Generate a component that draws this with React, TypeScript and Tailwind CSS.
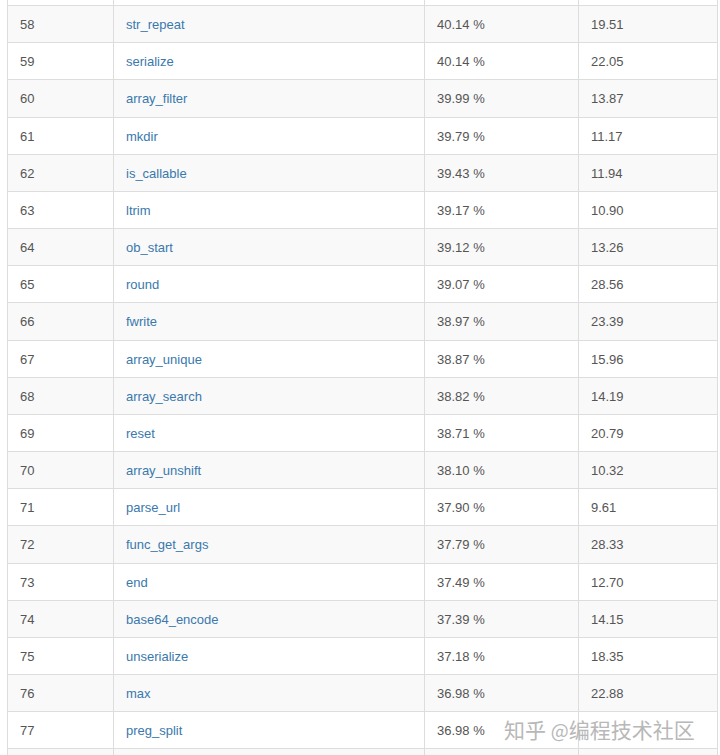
type Row = {
  rank: number;
  name: string;
  pct: string;
  time: string;
};

// rows 57 and 78 are only slivers at the top and bottom edge of the scrolled view
const ROWS: Row[] = [
  { rank: 57, name: "", pct: "", time: "" },
  { rank: 58, name: "str_repeat", pct: "40.14 %", time: "19.51" },
  { rank: 59, name: "serialize", pct: "40.14 %", time: "22.05" },
  { rank: 60, name: "array_filter", pct: "39.99 %", time: "13.87" },
  { rank: 61, name: "mkdir", pct: "39.79 %", time: "11.17" },
  { rank: 62, name: "is_callable", pct: "39.43 %", time: "11.94" },
  { rank: 63, name: "ltrim", pct: "39.17 %", time: "10.90" },
  { rank: 64, name: "ob_start", pct: "39.12 %", time: "13.26" },
  { rank: 65, name: "round", pct: "39.07 %", time: "28.56" },
  { rank: 66, name: "fwrite", pct: "38.97 %", time: "23.39" },
  { rank: 67, name: "array_unique", pct: "38.87 %", time: "15.96" },
  { rank: 68, name: "array_search", pct: "38.82 %", time: "14.19" },
  { rank: 69, name: "reset", pct: "38.71 %", time: "20.79" },
  { rank: 70, name: "array_unshift", pct: "38.10 %", time: "10.32" },
  { rank: 71, name: "parse_url", pct: "37.90 %", time: "9.61" },
  { rank: 72, name: "func_get_args", pct: "37.79 %", time: "28.33" },
  { rank: 73, name: "end", pct: "37.49 %", time: "12.70" },
  { rank: 74, name: "base64_encode", pct: "37.39 %", time: "14.15" },
  { rank: 75, name: "unserialize", pct: "37.18 %", time: "18.35" },
  { rank: 76, name: "max", pct: "36.98 %", time: "22.88" },
  { rank: 77, name: "preg_split", pct: "36.98 %", time: "" },
  { rank: 78, name: "", pct: "", time: "" },
];

const cell = "h-[37.16px] border border-[#dddddd] px-3 pt-[9px] pb-[7.16px] leading-5 align-top";

export default function App() {
  return (
    <div
      className="relative h-[755px] w-[720px] overflow-hidden bg-white text-[13px] text-[#555555]"
      style={{ fontFamily: '"Liberation Sans", Arial, "Noto Sans CJK SC", sans-serif' }}
    >
      <table className="ml-[7px] -mt-[32px] w-[710px] table-fixed border-collapse">
        <colgroup>
          <col className="w-[106px]" />
          <col className="w-[311px]" />
          <col className="w-[154px]" />
          <col className="w-[139px]" />
        </colgroup>
        <tbody>
          {ROWS.map((r) => (
            <tr key={r.rank} className={r.rank % 2 === 0 ? "bg-[#f9f9f9]" : "bg-white"}>
              <td className={cell}>{r.name ? r.rank : ""}</td>
              <td className={cell}>
                <a className="text-[#3a78ad]">{r.name}</a>
              </td>
              <td className={cell}>{r.pct}</td>
              <td className={cell}>{r.time}</td>
            </tr>
          ))}
        </tbody>
      </table>

      {/* zhihu watermark */}
      <div
        className="absolute left-[504px] top-[714px] whitespace-nowrap text-[21px] leading-[30px] text-[#b8b8b8]"
        style={{ fontFamily: '"Noto Sans CJK SC", sans-serif' }}
      >
        知乎 <span className="text-[19px]">@</span>编程技术社区
      </div>
    </div>
  );
}
